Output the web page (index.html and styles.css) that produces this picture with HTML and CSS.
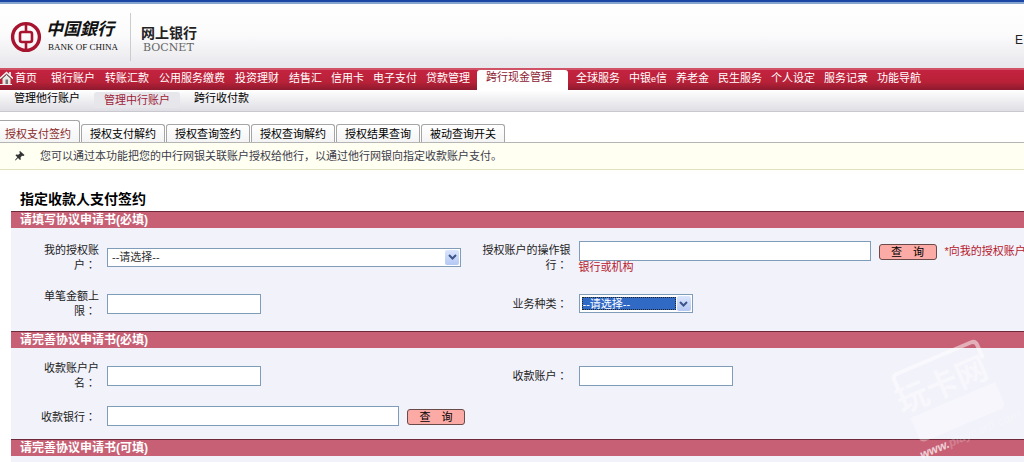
FILE: index.html
```html
<!DOCTYPE html>
<html lang="zh-CN">
<head>
    <meta charset="UTF-8">
    <meta name="viewport" content="width=device-width, initial-scale=1.0">
    <title>中国银行网上银行</title>
    <link rel="stylesheet" href="styles.css">
</head>
<body>
    <header class="header">
        <div class="logo">
            <svg class="logo-mark" viewBox="0 0 32 32" width="32" height="32" fill="none" stroke="#a8142f">
                <circle cx="16" cy="16" r="13.4" stroke-width="3.4"/>
                <rect x="10" y="11" width="12" height="10" rx="2" stroke-width="2.6"/>
                <path d="M16 3v8M16 21v8" stroke-width="2.6"/>
            </svg>
            <div class="logo-name">
                <span class="logo-cn">中国銀行</span>
                <span class="logo-en">BANK OF CHINA</span>
            </div>
            <div class="logo-sub">
                <span class="sub-cn">网上银行</span>
                <span class="sub-en">BOCNET</span>
            </div>
        </div>
        <a class="lang" href="#">E</a>
    </header>

    <nav class="nav">
        <a class="home" href="#">
            <svg viewBox="0 0 13 14" width="13" height="14">
                <path d="M9 1h2v4H9z" fill="#ddd"/>
                <path d="M2.500 7v6h8V7L6.500 3z" fill="#e9e9e4"/>
                <path d="M0 7.500L6.500 1.500 13 7.500" fill="none" stroke="#f4f4f4" stroke-width="1.600"/>
                <path d="M1.500 8L6.500 3.500 11.500 8" fill="none" stroke="#555" stroke-width="1"/>
                <path d="M5.500 8.500h2.500V13H5.500z" fill="#777"/>
                <path d="M0 13.500h12" stroke="#eee"/>
            </svg>
            首页</a>
        <div class="menu menu-main">
            <a href="#">银行账户</a>
            <a href="#">转账汇款</a>
            <a href="#">公用服务缴费</a>
            <a href="#">投资理财</a>
            <a href="#">结售汇</a>
            <a href="#">信用卡</a>
            <a href="#">电子支付</a>
            <a href="#">贷款管理</a>
        </div>
        <a class="current" href="#">跨行现金管理</a>
        <div class="menu">
            <a href="#">全球服务</a>
            <a href="#">中银<small>e</small>信</a>
            <a href="#">养老金</a>
            <a href="#">民生服务</a>
            <a href="#">个人设定</a>
            <a href="#">服务记录</a>
            <a href="#">功能导航</a>
        </div>
    </nav>

    <nav class="subnav">
        <a href="#">管理他行账户</a>
        <a class="on" href="#">管理中行账户</a>
        <a href="#">跨行收付款</a>
    </nav>

    <nav class="tabs">
        <a class="active" href="#">授权支付签约</a>
        <a href="#">授权支付解约</a>
        <a href="#">授权查询签约</a>
        <a href="#">授权查询解约</a>
        <a href="#">授权结果查询</a>
        <a href="#">被动查询开关</a>
    </nav>

    <div class="notice">
        <svg viewBox="0 0 10 10" width="10" height="10">
            <path d="M5 0l4.500 4-1 1-1.500-.3L5.500 6.500 5.800 8.500 5 9 3 7 .5 9.500 0 9l2.300-2.800L.5 4.200l.6-.8 2.200.4L5 2.300 4.300.8z" fill="#333"/>
        </svg>
        <p>您可以通过本功能把您的中行网银关联账户授权给他行，以通过他行网银向指定收款账户支付。</p>
    </div>

    <form class="form">
        <h1>指定收款人支付签约</h1>

        <h2>请填写协议申请书(必填)</h2>
        <section class="fields">
            <div class="row">
                <label for="account">我的授权账户<span class="colon" lang="zh-Hant">：</span></label>
                <div class="cell">
                    <div class="select select-wide">
                        <select id="account"><option>--请选择--</option></select>
                        <span class="arrow"><svg viewBox="0 0 9 6" width="9" height="6"><path d="M1 1l3.500 3.500L8 1" fill="none" stroke="#3d5588" stroke-width="2"/></svg></span>
                    </div>
                </div>
                <label for="bank">授权账户的操作银行<span class="colon" lang="zh-Hant">：</span></label>
                <div class="cell">
                    <div class="line">
                        <input class="long" type="text" id="bank">
                        <button type="button">查　询</button>
                        <span class="tip">*向我的授权账户</span>
                    </div>
                    <p class="tip">银行或机构</p>
                </div>
            </div>
            <div class="row">
                <label for="limit">单笔金额上限<span class="colon" lang="zh-Hant">：</span></label>
                <div class="cell"><input type="text" id="limit"></div>
                <label for="type">业务种类<span class="colon" lang="zh-Hant">：</span></label>
                <div class="cell">
                    <div class="select select-focus">
                        <select id="type"><option>--请选择--</option></select>
                        <span class="arrow"><svg viewBox="0 0 9 6" width="9" height="6"><path d="M1 1l3.500 3.500L8 1" fill="none" stroke="#3d5588" stroke-width="2"/></svg></span>
                    </div>
                </div>
            </div>
        </section>

        <h2>请完善协议申请书(必填)</h2>
        <section class="fields">
            <div class="row">
                <label for="payee">收款账户户名<span class="colon" lang="zh-Hant">：</span></label>
                <div class="cell"><input type="text" id="payee"></div>
                <label for="payee-no">收款账户<span class="colon" lang="zh-Hant">：</span></label>
                <div class="cell"><input type="text" id="payee-no"></div>
            </div>
            <div class="row">
                <label for="payee-bank">收款银行<span class="colon" lang="zh-Hant">：</span></label>
                <div class="cell">
                    <div class="line">
                        <input class="long" type="text" id="payee-bank">
                        <button type="button">查　询</button>
                    </div>
                </div>
            </div>
        </section>

        <h2>请完善协议申请书(可填)</h2>
        <section class="fields"></section>
    </form>

    <svg class="watermark" viewBox="0 0 134 132" width="134" height="132">
        <g transform="rotate(-23 6 50)">
            <path d="M6 56v-10q0-5 5-5h80q5 0 5 5v14" fill="none" stroke="#fff" stroke-width="4" opacity="0.5"/>
            <text class="mark-cn" x="0" y="80">玩卡网</text>
            <path d="M6 87h92v22q0 5-5 5H11q-5 0-5-5z" fill="#fff" opacity="0.3"/>
        </g>
        <text class="mark-url" transform="translate(32 125) rotate(-23)">www.<tspan opacity="0.3">playcard.com</tspan></text>
    </svg>
</body>
</html>
```
FILE: styles.css
```css
* {
    margin: 0;
    padding: 0;
    box-sizing: border-box;
}

:root {
    --red: #b51f36;
    --pink: #c76075;
    --panel: #f2f2fb;
    --field-border: #7f9db9;
}

body {
    font-family: "Liberation Sans", "Noto Sans CJK SC", sans-serif;
    font-size: 11px;
    line-height: 14px;
    color: #222;
    background: #fff;
    min-height: 100vh;
    position: relative;
    overflow: hidden;
}

a {
    color: inherit;
    text-decoration: none;
    white-space: nowrap;
}

/* header */
.header {
    display: flex;
    justify-content: space-between;
    align-items: center;
    height: 68px;
    padding: 4px 1px 0 10px;
    border-top: 2px solid #1a47a4;
    background: linear-gradient(#87a3d0 2px, #fff 2px, #fbfbfc 50%, #e7e7ec);
}

.logo {
    display: flex;
    align-items: center;
}

.logo-name {
    display: flex;
    flex-direction: column;
    padding: 0 12px 0 4px;
}

.logo-cn {
    font-size: 17px;
    line-height: 20px;
    font-weight: bold;
    font-style: italic;
    color: #111;
}

.logo-en {
    padding-left: 2px;
    font: 9px/14px "Liberation Serif", serif;
    color: #111;
    white-space: nowrap;
}

.logo-sub {
    display: flex;
    flex-direction: column;
    justify-content: center;
    height: 48px;
    padding: 4px 0 0 10px;
    border-left: 1px solid #ccc;
}

.sub-cn {
    font-size: 14px;
    line-height: 18px;
    font-weight: bold;
}

.sub-en {
    padding-left: 2px;
    font: 11px/12px "DejaVu Serif", serif;
    color: #666;
}

.lang {
    font-size: 12px;
    padding-top: 6px;
}

/* main navigation */
.nav {
    display: flex;
    height: 22px;
    color: #fff;
    border-top: 2px solid #cf5266;
    background: linear-gradient(#c4233f, #b82138 60%, #8d1a2e);
}

.home {
    display: flex;
    align-items: center;
    gap: 2px;
    margin-right: 14px;
    line-height: 16px;
    height: 16px;
}

.menu {
    display: flex;
    gap: 9px;
    line-height: 16px;
}

.menu-main a:nth-child(-n+4) {
    padding-right: 1px;
}

.menu small {
    font-size: 9px;
}

.current {
    margin: 0 8px 0 7px;
    padding: 0 16px 0 9px;
    line-height: 15px;
    color: #8c1c33;
    background: #fff;
    border-radius: 3px 3px 0 0;
}

.subnav {
    display: flex;
    align-items: flex-start;
    gap: 14px;
    height: 22px;
    padding: 0 14px;
    line-height: 16px;
    color: #000;
    border-bottom: 1px solid #c8c8ce;
    background: linear-gradient(#fff, #dedee4);
}

.subnav .on {
    margin-top: 2px;
    padding: 0 10px;
    color: #a01c38;
    background: #e6e6eb;
    border-radius: 3px;
}

/* tabs */
.tabs {
    display: flex;
    align-items: flex-end;
    gap: 1px;
    height: 31px;
    color: #000;
    border-bottom: 1px solid #b5b5b5;
}

.tabs a {
    height: 18px;
    padding: 0 8px;
    line-height: 18px;
    border: 1px solid #a5a5a5;
    border-bottom: 0;
    border-radius: 3px 3px 0 0;
    background: linear-gradient(#fff, #f4f4f4);
}

.tabs .active {
    height: 22px;
    padding-left: 5px;
    line-height: 26px;
    color: #8b2a2a;
    border-left: 0;
    border-top-left-radius: 0;
}

.notice {
    display: flex;
    align-items: center;
    gap: 15px;
    height: 27px;
    padding: 0 15px;
    color: #3c3c4a;
    border-bottom: 1px solid #e4e0bd;
    background: #fffff2;
}

/* form */
.form {
    padding: 19px 0 0 11px;
}

h1 {
    margin-bottom: 2px;
    padding-left: 9px;
    font-size: 14px;
    line-height: 20px;
    color: #000;
}

h2 {
    height: 17px;
    padding-left: 9px;
    font-size: 12px;
    line-height: 16px;
    color: #fff;
    border-top: 1px solid #6e2a3b;
    background: var(--pink);
}

.fields {
    min-height: 10px;
    padding: 5px 0;
    background: var(--panel);
}

.row {
    display: grid;
    grid-template-columns: 96px 9fr 107px 11fr;
    align-items: center;
    padding: 8px 0;
}

.row label {
    padding: 0 8px 0 26px;
    text-align: right;
}

.row label:nth-of-type(2) {
    padding-left: 8px;
}

.colon {
    font-family: "Noto Sans CJK TC", sans-serif;
    margin-right: 3px;
}

.cell {
    min-width: 0;
}

.line {
    display: flex;
    align-items: center;
    gap: 8px;
    white-space: nowrap;
}

input {
    display: block;
    flex: none;
    width: 154px;
    height: 20px;
    padding: 0 4px;
    font: inherit;
    border: 1px solid var(--field-border);
    background: #fff;
}

.long {
    width: 292px;
}

button {
    flex: none;
    width: 58px;
    height: 16px;
    margin-top: 2px;
    font: inherit;
    line-height: 13px;
    color: #000;
    border: 1px solid #6b4a4a;
    border-radius: 3px;
    background: #fbaaa5;
}

.tip {
    line-height: 12px;
    color: #b5202c;
}

.select {
    display: flex;
    width: 114px;
    height: 19px;
    padding: 1px;
    border: 1px solid var(--field-border);
    background: #fff;
    position: relative;
}

.select-wide {
    width: 354px;
}

.select select {
    width: 100%;
    padding: 0 20px 0 3px;
    font: inherit;
    color: #333;
    border: 0;
    background: transparent;
    appearance: none;
}

.select-focus select {
    width: 94px;
    margin: 1px;
    padding: 0;
    line-height: 12px;
    color: #fff;
    border: 1px dotted #222;
    background: #316ac5;
}

.arrow {
    position: absolute;
    top: 1px;
    right: 1px;
    bottom: 1px;
    width: 14px;
    display: flex;
    align-items: center;
    justify-content: center;
    border-radius: 2px;
    background: linear-gradient(#dbe6fd, #b4c8f4);
    pointer-events: none;
}

/* watermark over the lower right corner */
.watermark {
    position: absolute;
    right: 0;
    bottom: 0;
    pointer-events: none;
}

.mark-cn {
    font-size: 32px;
    font-weight: bold;
    fill: #fff;
    opacity: 0.4;
}

.mark-url {
    font-size: 12px;
    font-weight: bold;
    font-style: italic;
    fill: #fff;
    opacity: 0.7;
}
```
